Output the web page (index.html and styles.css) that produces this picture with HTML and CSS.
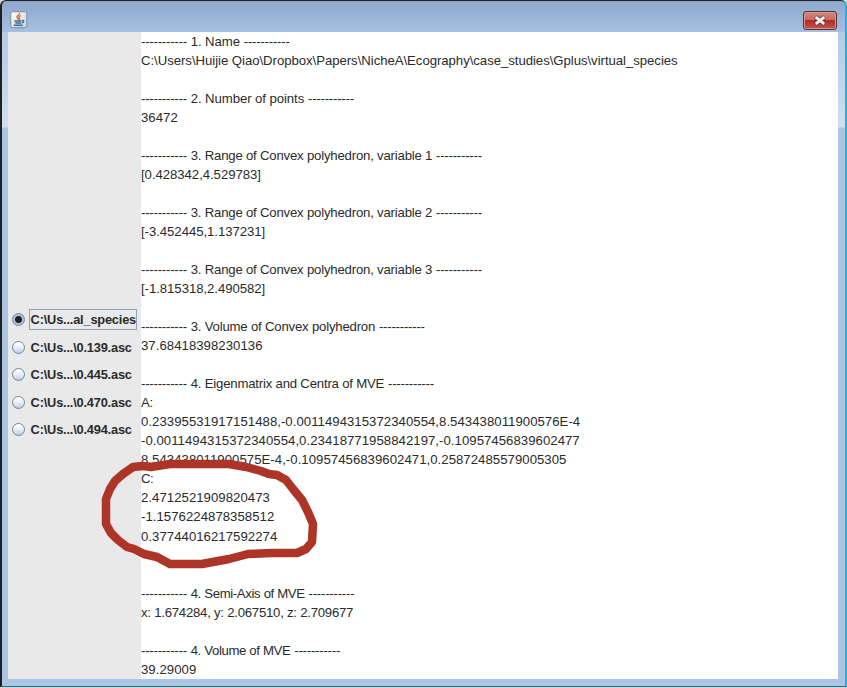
FILE: index.html
```html
<!DOCTYPE html>
<html lang="en">
<head>
<meta charset="utf-8">
<title>Virtual species</title>
<link rel="stylesheet" href="styles.css">
</head>
<body>
<div class="window">
  <header class="titlebar">
    <svg class="app-icon" width="18" height="18" viewBox="0 0 18 18">
      <defs><linearGradient id="tile" x2="1" y2="1"><stop stop-color="#fff"/><stop offset="1" stop-color="#c9d0d7"/></linearGradient></defs>
      <rect x=".8" y=".8" width="16" height="15.8" rx="1.5" fill="url(#tile)" stroke="#7890a4" stroke-width="1"/>
      <path d="M9.6 2C10.4 4 6.2 4.7 7 6.2C7.5 7.1 8.7 7.5 8.4 8.8M10.8 4.5C8.9 5.5 8.6 6.3 9.4 7.1C9.8 7.6 9.6 8.3 9.2 8.8" fill="none" stroke="#e0702c" stroke-width="1.4"/>
      <path d="M4.3 10H11.5M12 9.6c2.3-.6 2.4 2.1-.4 2.3M5.3 12h5.7M3.7 14.3h9" fill="none" stroke="#416b8c" stroke-width="1.4"/>
    </svg>
    <div class="close">
      <svg width="14" height="11" viewBox="0 0 14 11"><path d="M2.5 2L11.5 9M11.5 2L2.5 9" stroke="#613c42" stroke-width="4.6"/><path d="M2.8 2.2L11.2 8.8M11.2 2.2L2.8 8.8" stroke="#f4f2f0" stroke-width="2.8"/></svg>
    </div>
  </header>
  <main class="client">
    <div class="choices">
      <div class="choice selected"><i class="radio"></i><span class="caption">C:\Us...al_species</span></div>
      <div class="choice"><i class="radio"></i><span class="caption">C:\Us...\0.139.asc</span></div>
      <div class="choice"><i class="radio"></i><span class="caption">C:\Us...\0.445.asc</span></div>
      <div class="choice"><i class="radio"></i><span class="caption">C:\Us...\0.470.asc</span></div>
      <div class="choice"><i class="radio"></i><span class="caption">C:\Us...\0.494.asc</span></div>
    </div>
    <div class="report">
      <p class="head loose"><s>-----------</s><b>1. Name</b><s>-----------</s></p>
      <p class="path">C:\Users\Huijie Qiao\Dropbox\Papers\NicheA\Ecography\case_studies\Gplus\virtual_species</p>
      <p></p>
      <p class="head loose"><s>-----------</s><b>2. Number of points</b><s>-----------</s></p>
      <p>36472</p>
      <p></p>
      <p class="head"><s>-----------</s><b>3. Range of Convex polyhedron, variable 1</b><s>-----------</s></p>
      <p class="range">[0.428342,4.529783]</p>
      <p></p>
      <p class="head"><s>-----------</s><b>3. Range of Convex polyhedron, variable 2</b><s>-----------</s></p>
      <p class="range">[-3.452445,1.137231]</p>
      <p></p>
      <p class="head"><s>-----------</s><b>3. Range of Convex polyhedron, variable 3</b><s>-----------</s></p>
      <p class="range">[-1.815318,2.490582]</p>
      <p></p>
      <p class="head"><s>-----------</s><b>3. Volume of Convex polyhedron</b><s>-----------</s></p>
      <p>37.68418398230136</p>
      <p></p>
      <p class="head"><s>-----------</s><b>4. Eigenmatrix and Centra of MVE</b><s>-----------</s></p>
      <p class="label">A:</p>
      <p>0.23395531917151488,-0.0011494315372340554,8.543438011900576E-4</p>
      <p>-0.0011494315372340554,0.23418771958842197,-0.10957456839602477</p>
      <p>8.543438011900575E-4,-0.10957456839602471,0.25872485579005305</p>
      <p class="label">C:</p>
      <p>2.4712521909820473</p>
      <p>-1.1576224878358512</p>
      <p>0.37744016217592274</p>
      <p></p>
      <p></p>
      <p class="head tight"><s>-----------</s><b>4. Semi-Axis of MVE</b><s>-----------</s></p>
      <p class="axes">x: 1.674284, y: 2.067510, z: 2.709677</p>
      <p></p>
      <p class="head tight"><s>-----------</s><b>4. Volume of MVE</b><s>-----------</s></p>
      <p>39.29009</p>
    </div>
  </main>
</div>
<svg class="marker" width="240" height="140" viewBox="0 0 240 140">
  <path d="M53 26L43 27L33 34L25 41L20 49L16 59L16 84L21 93L28 100L37 107L44 109L54 114L67 117L80 124L112 124L139 119L158 114L182 113L207 113L216 109L222 102L223 84L218 72L212 60L203 49L196 40L187 35L179 34L171 31L156 27L139 24L118 24L80 24L61 27Z"/>
</svg>
</body>
</html>
```
FILE: styles.css
```css
* { box-sizing: border-box; }
body {
  margin: 0;
  height: 688px;
  overflow: hidden;
  position: relative;
  background: #d5d5d5;
  font: 13.2px/19.04px "Liberation Sans", Arial, sans-serif;
  color: #2b2b2b;
}
.window {
  height: 687px;
  display: flex;
  flex-direction: column;
  padding: 1px 7px 7px 6px;
  border: solid #202024;
  border-width: 1px 2px 1px 2px;
  border-right-color: #16b6dc;
  border-bottom-color: #167986;
  border-radius: 6px 6px 0 0;
  background:
    linear-gradient(#8da8cb, #a5c0e1 31px, transparent 31px),
    linear-gradient(#a9c4e4, #cfdff0 126px, #abc6e5 127px, #abc6e5);
}
.titlebar {
  height: 30px;
  flex: none;
  display: flex;
  justify-content: space-between;
  align-items: flex-start;
  padding: 9px 1px 0 2px;
}
.app-icon { display: block; }
.close {
  width: 34px;
  height: 19px;
  display: flex;
  align-items: center;
  justify-content: center;
  border: 1px solid #54333e;
  border-radius: 3px;
  box-shadow: inset 0 0 0 1px #d8948c;
  background: linear-gradient(#d48d83, #c9685e 47%, #ac2e25 50%, #c4584b);
}
.client {
  height: 647px;
  flex: none;
  display: flex;
  background: #fff;
}
.choices {
  width: 133px;
  padding: 277px 0 0 4px;
  background: #e9e9e9;
}
.choice {
  height: 21px;
  margin-bottom: 6.5px;
  display: flex;
  align-items: center;
  font-size: 12.8px;
  font-weight: bold;
  letter-spacing: -.19px;
}
.radio {
  width: 13px;
  height: 13px;
  flex: none;
  border: 1px solid #72869b;
  border-radius: 50%;
  background: linear-gradient(#fff 20%, #b9d0e6);
}
.selected .radio { background: radial-gradient(circle, #202020 3px, #a9c2da 4px); }
.caption {
  height: 21px;
  margin-left: 4px;
  padding-left: .6px;
  border: 1px solid transparent;
  line-height: 19px;
  white-space: nowrap;
}
.selected .caption { width: 108px; border-color: #8ba5c1; }
.report { margin-top: -.3px; white-space: nowrap; }
p { height: 19.04px; margin: 0; letter-spacing: .03px; }
s, b { text-decoration: none; font-weight: normal; }
.head s { letter-spacing: -.225px; }
.head b { margin: 0 3.8px; letter-spacing: -.205px; }
.head.loose b { letter-spacing: -.08px; }
.head.tight b { letter-spacing: -.36px; }
.path { letter-spacing: -.05px; }
.range { letter-spacing: -.06px; }
.axes { letter-spacing: -.25px; }
.label { letter-spacing: -.4px; }
.marker { position: absolute; left: 90px; top: 440px; }
.marker path {
  fill: none;
  stroke: #ac3527;
  stroke-width: 8.5;
  stroke-linejoin: round;
}
```
